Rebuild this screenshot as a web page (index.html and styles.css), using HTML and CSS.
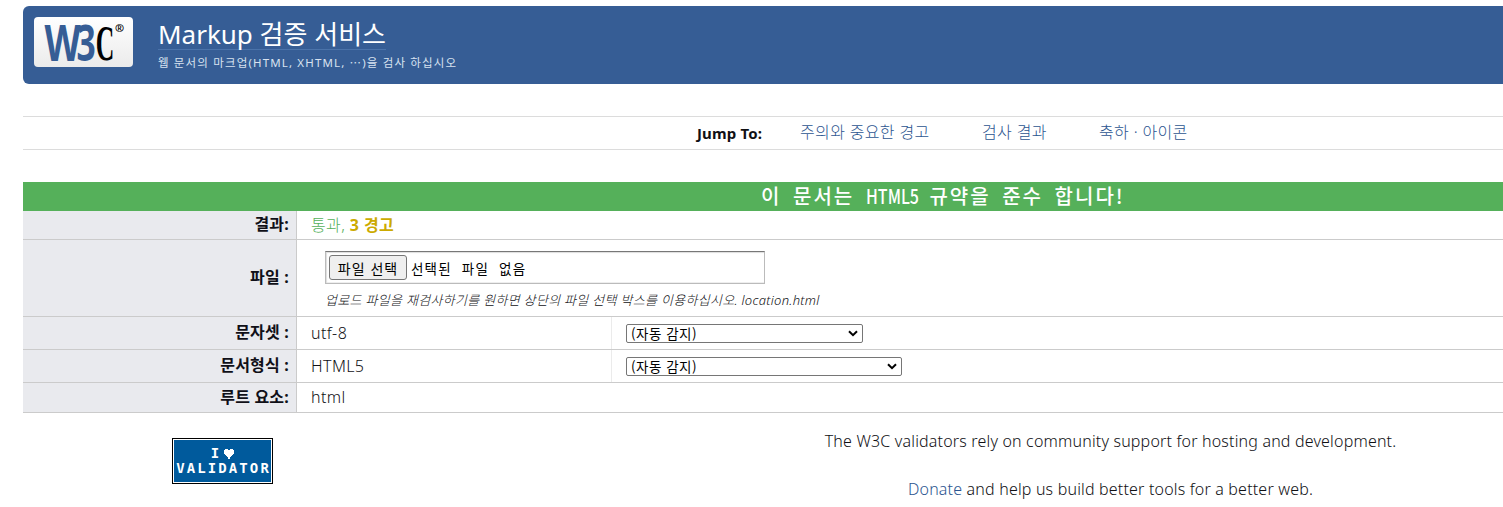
FILE: index.html
```html
<!DOCTYPE html>
<html lang="ko">
<head>
<meta charset="utf-8">
<title>Markup 검증 서비스</title>
<link rel="stylesheet" href="styles.css">
</head>
<body>
<header class="banner">
  <svg class="logo" width="99" height="50" viewBox="0 0 99 50" role="img" aria-label="W3C">
    <defs><linearGradient id="plate" x1="0" y1="0" x2="0" y2="1"><stop offset="0" stop-color="#fff"/><stop offset="1" stop-color="#ebebeb"/></linearGradient></defs>
    <rect width="99" height="50" rx="4" fill="url(#plate)"/>
    <text class="logo-w" transform="translate(10.5 43.5) scale(.71 1)" textLength="51" lengthAdjust="spacingAndGlyphs">W</text>
    <text class="logo-3" transform="translate(42.5 43.5) scale(.8 1)" textLength="24" lengthAdjust="spacingAndGlyphs">3</text>
    <text class="logo-c" transform="translate(61.8 43) scale(.64 1)" textLength="29" lengthAdjust="spacingAndGlyphs">C</text>
    <text class="logo-r" x="81" y="15">®</text>
  </svg>
  <div class="heading">
    <h1><a>Markup 검증 서비스</a></h1>
    <p>웹 문서의 마크업(HTML, XHTML, ⋯)을 검사 하십시오</p>
  </div>
</header>
<nav class="jump">
  <strong>Jump To:</strong><a class="j1">주의와 중요한 경고</a><a class="j2">검사 결과</a><a class="j3">축하 · 아이콘</a>
</nav>
<main>
  <h2 class="verdict">이 문서는 <span class="latin">HTML5</span> 규약을 준수 합니다!</h2>
  <div class="row result"><div class="label">결과:</div><div class="value"><span class="pass">통과, </span><b class="warn">3 경고</b></div></div>
  <div class="row file"><div class="label">파일 :</div><div class="upload">
    <div class="filebox"><button type="button">파일 선택</button><span class="filename">선택된 파일 없음</span></div>
    <p class="hint">업로드 파일을 재검사하기를 원하면 상단의 파일 선택 박스를 이용하십시오. <span>location.html</span></p>
  </div></div>
  <div class="row opt"><div class="label">문자셋 :</div><div class="value half">utf-8</div><div class="choice"><div class="select charset">(자동 감지)<svg width="10" height="7" viewBox="0 0 10 7"><path d="M1 1.2l4 4 4-4" fill="none" stroke="#000" stroke-width="2"/></svg></div></div></div>
  <div class="row opt"><div class="label">문서형식 :</div><div class="value half">HTML5</div><div class="choice"><div class="select doctype">(자동 감지)<svg width="10" height="7" viewBox="0 0 10 7"><path d="M1 1.2l4 4 4-4" fill="none" stroke="#000" stroke-width="2"/></svg></div></div></div>
  <div class="row root"><div class="label">루트 요소:</div><div class="value">html</div></div>
</main>
<footer class="support">
  <div class="badge"><span class="love">I <svg width="10" height="10" viewBox="0 0 10 10" shape-rendering="crispEdges"><path fill="#fff" d="M1 0h3v1h2V0h3v1h1v4H9v1H8v1H7v1H6v2H4V8H3V7H2V6H1V5H0V1h1z"/></svg></span><span class="word">VALIDATOR</span></div>
  <div class="donate"><p class="s1">The W3C validators rely on community support for hosting and development.</p><p class="s2"><a>Donate</a> and help us build better tools for a better web.</p></div>
</footer>
</body>
</html>
```
FILE: styles.css
```css
* { box-sizing: border-box; }
body { margin: 0; padding: 6px 0 0 23px; height: 507px; overflow: hidden; background: #fff; color: #101014; font: 300 16px/24px "Noto Sans", "Noto Sans CJK KR", sans-serif; }
h1, h2, p { margin: 0; font-weight: inherit; }
a { color: #2c5590; text-decoration: none; }
.banner { display: flex; height: 78px; padding: 11px; background: #365d95; border-radius: 6px 0 0 6px; }
.logo { display: block; flex: none; overflow: visible; }
.logo text { font-family: "Open Sans", sans-serif; font-size: 51px; font-weight: 700; fill: #365d95; }
.logo .logo-c { font-family: "Liberation Serif", serif; font-weight: 700; fill: #000; }
.logo .logo-r { font-size: 11px; fill: #000; font-weight: 700; }
.heading { padding-left: 25px; white-space: nowrap; }
.heading h1 { height: 33px; font-size: 26px; font-weight: 400; line-height: 35px; }
.heading h1 a { display: inline-block; height: 33px; color: #fff; border-bottom: 1px solid #4b73aa; }
.heading p { margin-top: 4px; font-size: 11.5px; font-weight: 400; line-height: 18px; letter-spacing: 1.15px; color: #d8e2f0; }
.jump { display: flex; height: 34px; margin-top: 32px; padding-left: 674px; border: solid #dcdcdc; border-width: 1px 0; line-height: 31px; white-space: nowrap; font-size: 16px; letter-spacing: .35px; }
.jump strong { width: 103px; font-size: 15px; font-weight: 700; line-height: 32px; letter-spacing: .15px; }
.j1 { width: 182px; }
.j2 { width: 117px; }
.verdict { height: 29px; margin-top: 32px; padding-left: 738px; background: #55b05a; color: #fff; font: 500 20px/28px "Noto Sans CJK KR", sans-serif; white-space: nowrap; letter-spacing: 2px; word-spacing: 4px; }
.latin { display: inline-block; width: 52px; letter-spacing: 0; transform: scaleX(.8); transform-origin: 0 0; }
.row { display: flex; border-bottom: 1px solid #cbcbcb; }
.label { display: flex; flex: none; align-items: center; justify-content: flex-end; width: 274px; padding: 0 7px 2px 0; border-right: 1px solid #cbcbcb; background: #e9eaee; color: #101018; font-size: 16px; font-weight: 700; letter-spacing: .2px; white-space: nowrap; }
.value { display: flex; align-items: center; padding: 0 0 1px 14px; white-space: pre; letter-spacing: .4px; }
.pass { color: #55b05a; }
.warn { color: #ca0; font-weight: 700; }
.result { height: 29px; }
.file { height: 77px; }
.opt { height: 33px; }
.root { height: 30px; }
.half { width: 315px; border-right: 1px solid #ebebeb; }
.upload { padding: 11px 0 0 28px; }
.filebox { display: flex; align-items: center; width: 440px; height: 33px; padding: 0 3px; border: 1px solid #bbb; border-top-color: #777; box-shadow: inset 1px 1px 1px #ddd, inset 0 -1px #eee; color: #000; font: 400 13px/20px "Noto Sans CJK KR", sans-serif; }
.filebox button { width: 78px; height: 25px; margin-right: 4px; padding: 0; border: 1px solid #767676; border-radius: 3px; background: #efefef; color: #000; font: 400 14px/20px "Noto Sans CJK KR", sans-serif; letter-spacing: 1px; white-space: nowrap; }
.filename { font-size: 13.5px; letter-spacing: 1.2px; word-spacing: 5px; }
.hint { margin-top: 6px; font-size: 13px; line-height: 20px; letter-spacing: .3px; font-style: italic; white-space: nowrap; }
.choice { display: flex; align-items: center; padding-left: 14px; }
.select { display: flex; align-items: center; justify-content: space-between; height: 19px; padding: 0 4px; border: 1px solid #767676; border-radius: 2px; background: #fff; color: #000; font: 400 13.5px/17px "Noto Sans CJK KR", sans-serif; letter-spacing: .5px; }
.charset { width: 237px; }
.doctype { width: 276px; }
.support { display: flex; }
.badge { display: flex; flex: none; flex-direction: column; align-items: center; width: 101px; height: 46px; margin: 25px 0 0 149px; padding-top: 7px; border: 1px solid #000; box-shadow: inset 0 0 0 1px #fff; background: #005a9c; color: #fff; font: 700 14px/15px "DejaVu Sans Mono", monospace; }
.love { display: flex; align-items: center; gap: 5px; height: 15px; }
.word { letter-spacing: 2.1px; margin-right: -2.1px; white-space: nowrap; }
.donate { width: 830px; margin: 16px 0 0 422px; padding-left: 23px; text-align: center; letter-spacing: .18px; white-space: nowrap; }
.s2 { margin-top: 24px; }
```
